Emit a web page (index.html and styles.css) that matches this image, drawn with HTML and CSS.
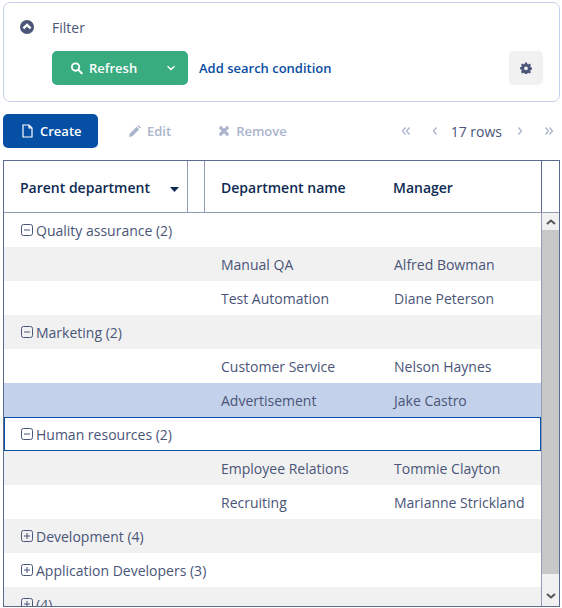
FILE: index.html
```html
<!DOCTYPE html>
<html lang="en">
<head>
    <meta charset="UTF-8">
    <title>Departments</title>
    <link rel="stylesheet" href="styles.css">
</head>
<body>
    <div class="filter-panel">
        <div class="filter-head">
            <svg class="collapse-icon" viewBox="0 0 14 14"><circle cx="7" cy="7" r="7" fill="#4a5578"/><path d="M3.4 8.4 7 4.9l3.6 3.5" fill="none" stroke="#fff" stroke-width="2.4"/></svg>
            <span class="filter-title">Filter</span>
        </div>
        <div class="filter-actions">
            <div class="refresh-btn">
                <svg class="btn-icon" viewBox="0 0 14 14"><circle cx="6" cy="6" r="4" fill="none" stroke="#fff" stroke-width="2"/><path d="m9 9 3.6 3.6" stroke="#fff" stroke-width="2.2" stroke-linecap="round"/></svg>
                <span class="refresh-label">Refresh</span>
                <svg class="refresh-arrow" viewBox="0 0 10 6"><path d="m1.5 1.2 3.5 3.3 3.5-3.3" fill="none" stroke="#fff" stroke-width="1.4"/></svg>
            </div>
            <a class="add-condition">Add search condition</a>
            <div class="settings-btn">
                <svg viewBox="0 0 12 12" width="12" height="12"><path fill="#4a5578" fill-rule="evenodd" d="M5 .5h2l.3 1.5 1 .4L9.600 1.600l1.400 1.400-.8 1.300.4 1 1.400.3v2l-1.400.3-.4 1 .8 1.300-1.400 1.400-1.300-.8-1 .4-.3 1.400H5l-.3-1.400-1-.4-1.300.8L1 9.900l.8-1.300-.4-1L0 7.300v-2l1.400-.3.4-1L1 2.700l1.400-1.100 1.300.8 1-.4zM6 4.400a1.900 1.900 0 1 0 0 3.800 1.900 1.900 0 0 0 0-3.800z"/></svg>
            </div>
        </div>
    </div>

    <div class="toolbar">
        <div class="create-btn">
            <svg class="btn-icon" viewBox="0 0 12 14"><path d="M1.500 1h6l3 3v9h-9zM7.500 1v3h3" fill="none" stroke="#fff" stroke-width="1.200"/></svg>
            Create
        </div>
        <div class="tool-btn edit-btn">
            <svg class="tool-icon" viewBox="0 0 12 12"><path fill="#aab4cc" d="M0 12l.8-3.400L7.600 1.800l2.600 2.600-6.800 6.800zM8.400 1l1-1 2.600 2.600-1 1z"/></svg>
            Edit
        </div>
        <div class="tool-btn remove-btn">
            <svg class="tool-icon" viewBox="0 0 10 10"><path d="m1.500 1.500 7 7m0-7-7 7" stroke="#aab4cc" stroke-width="2.600"/></svg>
            Remove
        </div>
        <div class="pager">
            <svg class="pager-icon first" viewBox="0 0 10 10"><path d="M4.500 1.500 1.500 5l3 3.500M8.500 1.500 5.500 5l3 3.500" fill="none" stroke="#aab4cc" stroke-width="1.300"/></svg>
            <svg class="pager-icon prev" viewBox="0 0 10 10"><path d="M6.500 1.500 3.500 5l3 3.500" fill="none" stroke="#aab4cc" stroke-width="1.300"/></svg>
            <span class="row-count">17 rows</span>
            <svg class="pager-icon next" viewBox="0 0 10 10"><path d="M3.500 1.500 6.500 5l-3 3.500" fill="none" stroke="#aab4cc" stroke-width="1.300"/></svg>
            <svg class="pager-icon last" viewBox="0 0 10 10"><path d="M1.500 1.500 4.500 5l-3 3.500M5.500 1.500 8.500 5l-3 3.500" fill="none" stroke="#aab4cc" stroke-width="1.300"/></svg>
        </div>
    </div>

    <div class="grid">
        <div class="grid-header">
            <div class="head-cell head-parent">
                Parent department
                <svg class="sort-icon" viewBox="0 0 9 5"><path fill="#0d2a52" d="M0 0h9L4.500 5z"/></svg>
            </div>
            <div class="head-cell head-spacer"></div>
            <div class="head-cell head-dept">Department name</div>
            <div class="head-cell head-manager">Manager</div>
            <div class="head-cell head-scroll"></div>
        </div>
        <div class="grid-body">
            <div class="rows">
                <div class="row group">
                    <svg class="toggle" viewBox="0 0 12 12"><rect x=".5" y=".5" width="11" height="11" rx="2" fill="none" stroke="#4a5578"/><path d="M3 6h6" stroke="#4a5578"/></svg>
                    Quality assurance (2)
                </div>
                <div class="row alt"><span class="cell-dept">Manual QA</span><span class="cell-manager">Alfred Bowman</span></div>
                <div class="row"><span class="cell-dept">Test Automation</span><span class="cell-manager">Diane Peterson</span></div>
                <div class="row group alt">
                    <svg class="toggle" viewBox="0 0 12 12"><rect x=".5" y=".5" width="11" height="11" rx="2" fill="none" stroke="#4a5578"/><path d="M3 6h6" stroke="#4a5578"/></svg>
                    Marketing (2)
                </div>
                <div class="row"><span class="cell-dept">Customer Service</span><span class="cell-manager">Nelson Haynes</span></div>
                <div class="row selected"><span class="cell-dept">Advertisement</span><span class="cell-manager">Jake Castro</span></div>
                <div class="row group focused">
                    <svg class="toggle" viewBox="0 0 12 12"><rect x=".5" y=".5" width="11" height="11" rx="2" fill="none" stroke="#4a5578"/><path d="M3 6h6" stroke="#4a5578"/></svg>
                    Human resources (2)
                </div>
                <div class="row alt"><span class="cell-dept">Employee Relations</span><span class="cell-manager">Tommie Clayton</span></div>
                <div class="row"><span class="cell-dept">Recruiting</span><span class="cell-manager">Marianne Strickland</span></div>
                <div class="row group alt">
                    <svg class="toggle" viewBox="0 0 12 12"><rect x=".5" y=".5" width="11" height="11" rx="2" fill="none" stroke="#4a5578"/><path d="M3 6h6M6 3v6" stroke="#4a5578"/></svg>
                    Development (4)
                </div>
                <div class="row group">
                    <svg class="toggle" viewBox="0 0 12 12"><rect x=".5" y=".5" width="11" height="11" rx="2" fill="none" stroke="#4a5578"/><path d="M3 6h6M6 3v6" stroke="#4a5578"/></svg>
                    Application Developers (3)
                </div>
                <div class="row group alt">
                    <svg class="toggle" viewBox="0 0 12 12"><rect x=".5" y=".5" width="11" height="11" rx="2" fill="none" stroke="#4a5578"/><path d="M3 6h6M6 3v6" stroke="#4a5578"/></svg>
                    (4)
                </div>
            </div>
            <div class="scrollbar">
                <div class="scroll-btn">
                    <svg viewBox="0 0 10 6" width="10" height="6"><path d="m1 5 4-3.500L9 5" fill="none" stroke="#555" stroke-width="2"/></svg>
                </div>
                <div class="scroll-thumb"></div>
                <div class="scroll-btn scroll-down">
                    <svg viewBox="0 0 10 6" width="10" height="6"><path d="m1 1 4 3.500L9 1" fill="none" stroke="#555" stroke-width="2"/></svg>
                </div>
            </div>
        </div>
    </div>
</body>
</html>
```

FILE: styles.css
```css
* {
    box-sizing: border-box;
}
html, body {
    height: 100%;
}
body {
    margin: 0;
    padding: 2px 2px 0 3px;
    overflow: hidden;
    font-family: "Open Sans", sans-serif;
    font-size: 14px;
    color: #4a5578;
    background-color: #fff;
}
.filter-panel {
    height: 100px;
    border: 1px solid #c5d1ea;
    border-radius: 7px;
    padding: 13px 16px 0 16px;
}
.filter-head {
    display: flex;
    align-items: center;
    height: 22px;
}
.collapse-icon {
    width: 14px;
    height: 14px;
}
.filter-title {
    margin-left: 18px;
}
.filter-actions {
    display: flex;
    align-items: center;
    margin-top: 13px;
    margin-left: 32px;
}
.refresh-btn {
    display: flex;
    align-items: center;
    width: 136px;
    height: 34px;
    padding-left: 18px;
    border-radius: 5px;
    background-color: #38ab7f;
    color: #fff;
    font-weight: 600;
    font-size: 13px;
}
.btn-icon {
    width: 13px;
    height: 14px;
    flex: none;
}
.refresh-label {
    margin-left: 6px;
}
.refresh-arrow {
    width: 10px;
    height: 6px;
    margin-left: 29px;
}
.add-condition {
    margin-left: 11px;
    color: #0b4da2;
    font-weight: 600;
    font-size: 13px;
}
.settings-btn {
    display: flex;
    align-items: center;
    justify-content: center;
    width: 34px;
    height: 34px;
    margin-left: auto;
    border-radius: 5px;
    background-color: #f1f1f1;
}
.toolbar {
    display: flex;
    align-items: center;
    height: 34px;
    margin-top: 12px;
    font-size: 13px;
    font-weight: 600;
}
.create-btn {
    display: flex;
    align-items: center;
    gap: 6px;
    width: 95px;
    height: 34px;
    padding-left: 18px;
    border-radius: 5px;
    background-color: #0550a5;
    color: #fff;
}
.tool-btn {
    display: flex;
    align-items: center;
    gap: 6px;
    color: #aab4cc;
}
.tool-icon {
    width: 12px;
    height: 12px;
}
.edit-btn {
    margin-left: 31px;
}
.remove-btn {
    margin-left: 47px;
}
.pager {
    display: flex;
    align-items: center;
    margin-left: auto;
    padding-right: 6px;
    font-weight: 400;
}
.pager-icon {
    width: 10px;
    height: 10px;
}
.prev {
    margin-left: 19px;
}
.row-count {
    margin: 0 13px 0 11px;
    font-size: 14px;
}
.last {
    margin-left: 19px;
}
.grid {
    display: flex;
    flex-direction: column;
    height: 447px;
    margin-top: 12px;
    border: 1px solid #5d6b8f;
    overflow: hidden;
}
.grid-header {
    display: flex;
    flex: none;
    height: 52px;
    border-bottom: 1px solid #929cb5;
    color: #0d2a52;
    font-weight: 600;
}
.head-cell {
    display: flex;
    align-items: center;
    padding-top: 2px;
}
.head-parent {
    width: 184px;
    padding-left: 16px;
    border-right: 1px solid #929cb5;
}
.sort-icon {
    width: 9px;
    height: 5px;
    margin-left: 20px;
    margin-top: 3px;
}
.head-spacer {
    width: 17px;
    border-right: 1px solid #929cb5;
}
.head-dept {
    width: 188px;
    padding-left: 16px;
}
.head-manager {
    width: 149px;
    border-right: 1px solid #5d6b8f;
}
.head-scroll {
    flex: 1;
}
.grid-body {
    display: flex;
    flex: 1;
    min-height: 0;
}
.rows {
    flex: 1;
    min-width: 0;
}
.row {
    display: flex;
    align-items: center;
    height: 34px;
    padding-left: 217px;
}
.group {
    padding-left: 17px;
}
.alt {
    background-color: #f1f1f1;
}
.selected {
    background-color: #c4d1ea;
}
.focused {
    border: 1px solid #0550a5;
    padding-left: 16px;
}
.toggle {
    width: 12px;
    height: 12px;
    margin-right: 3px;
    flex: none;
}
.cell-dept {
    width: 173px;
}
.scrollbar {
    display: flex;
    flex-direction: column;
    flex: none;
    width: 18px;
    border-left: 1px solid #929cb5;
    background-color: #f1f1f1;
}
.scroll-btn {
    display: flex;
    align-items: center;
    justify-content: center;
    height: 17px;
}
.scroll-thumb {
    flex: 1;
    background-color: #c8c8c8;
}
.scroll-down {
    height: 32px;
    padding-top: 12px;
}
```
